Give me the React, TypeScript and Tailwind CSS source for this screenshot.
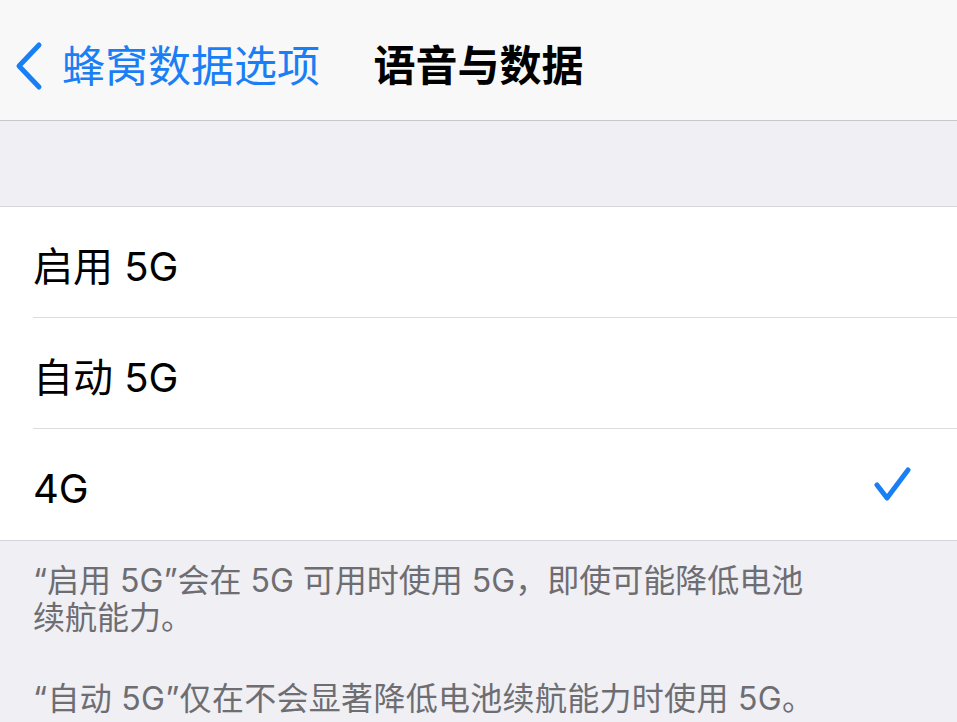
const font = "font-['Inter','Noto_Sans_CJK_SC',sans-serif]";

const options = [
  { label: "启用 5G", selected: false },
  { label: "自动 5G", selected: false },
  { label: "4G", selected: true },
];

export default function App() {
  return (
    <div className={`h-[722px] w-full overflow-hidden bg-[#efeff4] ${font}`}>
      {/* Nav bar */}
      <div className="grid h-[121px] grid-cols-[1fr_auto_1fr] items-center border-b border-[#c8c7cc] bg-[#f8f8f8] pt-[12px]">
        <div className="flex items-center gap-[18px] pl-[14px]">
          <svg width="30" height="50" viewBox="0 0 30 50" fill="none">
            <path d="M25 4 L5 25 L25 46" stroke="#1a7ff5" strokeWidth="5" strokeLinecap="round" strokeLinejoin="round" />
          </svg>
          <span className="text-[43px] leading-none text-[#1a7ff5]">蜂窝数据选项</span>
        </div>
        <h1 className="text-[42px] font-bold leading-none text-black">语音与数据</h1>
        <div />
      </div>

      {/* Gap */}
      <div className="h-[86px] border-b border-[#d6d6da]" />

      {/* Options */}
      <div className="border-b border-[#d6d6da] bg-white">
        {options.map((o, i) => (
          <div key={o.label} className="pl-[33px]">
            <div
              className={`flex h-[111px] items-center justify-between pr-[44px] ${
                i < options.length - 1 ? "border-b border-[#dcdce0]" : ""
              }`}
            >
              <span className="pt-[9px] text-[40px] leading-none text-black">{o.label}</span>
              {o.selected && (
                <svg width="40" height="38" viewBox="0 0 40 38" fill="none">
                  <path d="M4 19 L14 32 L35 4" stroke="#1a7ff5" strokeWidth="5" strokeLinecap="round" strokeLinejoin="round" />
                </svg>
              )}
            </div>
          </div>
        ))}
      </div>

      {/* Footer */}
      <div className="space-y-[44px] px-[33px] pt-[21px] text-[32px] leading-[37px] text-[#6d6d72]">
        <p className="whitespace-nowrap">
          “启用 5G”会在 5G 可用时使用 5G，即使可能降低电池
          <br />
          续航能力。
        </p>
        <p className="whitespace-nowrap tracking-[0.3px]">“自动 5G”仅在不会显著降低电池续航能力时使用 5G。</p>
      </div>
    </div>
  );
}
